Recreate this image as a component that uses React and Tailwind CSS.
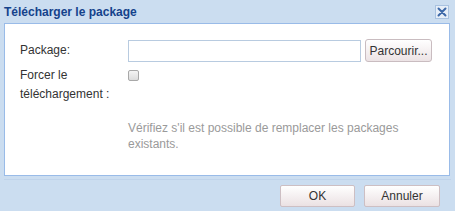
import React from "react";

export default function App() {
  const font = { fontFamily: '"Liberation Sans", Arial, sans-serif' };
  return (
    <div
      className="w-[455px] h-[211px] bg-[#cbddf0] flex flex-col overflow-hidden"
      style={font}
    >
      {/* Title bar */}
      <div className="h-[23px] flex items-center justify-between pl-[4px] pr-[6px]">
        <span className="text-[12px] font-bold text-[#15428b] leading-none">
          Télécharger le package
        </span>
        <div className="w-[14px] h-[14px] bg-[#e6eef8] border border-[#a9c2e0] flex items-center justify-center mt-[1px]">
          <svg width="10" height="10" viewBox="0 0 10 10">
            <path
              d="M1.5 1.5 L8.5 8.5 M8.5 1.5 L1.5 8.5"
              stroke="#3c68a8"
              strokeWidth="2"
              strokeLinecap="round"
            />
          </svg>
        </div>
      </div>

      {/* Body */}
      <div className="mx-[4px] mr-[5px] h-[153px] bg-white border border-[#99bbe8] pl-[15px] pt-[15px]">
        <div className="flex items-center h-[23px]">
          <div className="w-[108px] text-[12px] text-[#333] leading-[19px]">Package:</div>
          <div className="w-[233px] h-[22px] border border-[#b8cbe0] bg-white" />
          <button className="ml-[4px] h-[23px] w-[67px] rounded-[3px] border border-[#c9bcc0] bg-gradient-to-b from-[#ffffff] to-[#ece3e5] text-[12px] text-[#333] leading-none">
            Parcourir...
          </button>
        </div>
        <div className="flex mt-[4px]">
          <div className="w-[108px] text-[12px] text-[#333] leading-[19px]">
            Forcer le
            <br />
            téléchargement :
          </div>
          <div className="mt-[4px] w-[11px] h-[11px] rounded-[2px] border border-[#a8a8a8] bg-gradient-to-b from-[#f4f4f4] to-[#dcdcdc]" />
        </div>
        <div className="ml-[108px] mt-[16px] text-[12px] text-[#9a9a9a] leading-[16px]">
          Vérifiez s'il est possible de remplacer les packages
          <br />
          existants.
        </div>
      </div>

      {/* Footer */}
      <div className="mx-[4px] mt-[3px] border-t border-[#bfd3ea] flex justify-end pt-[5px] pr-[11px] gap-[9px]">
        <button className="w-[75px] h-[22px] rounded-[2px] border border-[#cdbfc3] bg-gradient-to-b from-[#ffffff] to-[#ebe1e3] text-[12px] text-[#333] leading-none">
          OK
        </button>
        <button className="w-[76px] h-[22px] rounded-[2px] border border-[#cdbfc3] bg-gradient-to-b from-[#ffffff] to-[#ebe1e3] text-[12px] text-[#333] leading-none">
          Annuler
        </button>
      </div>
    </div>
  );
}
